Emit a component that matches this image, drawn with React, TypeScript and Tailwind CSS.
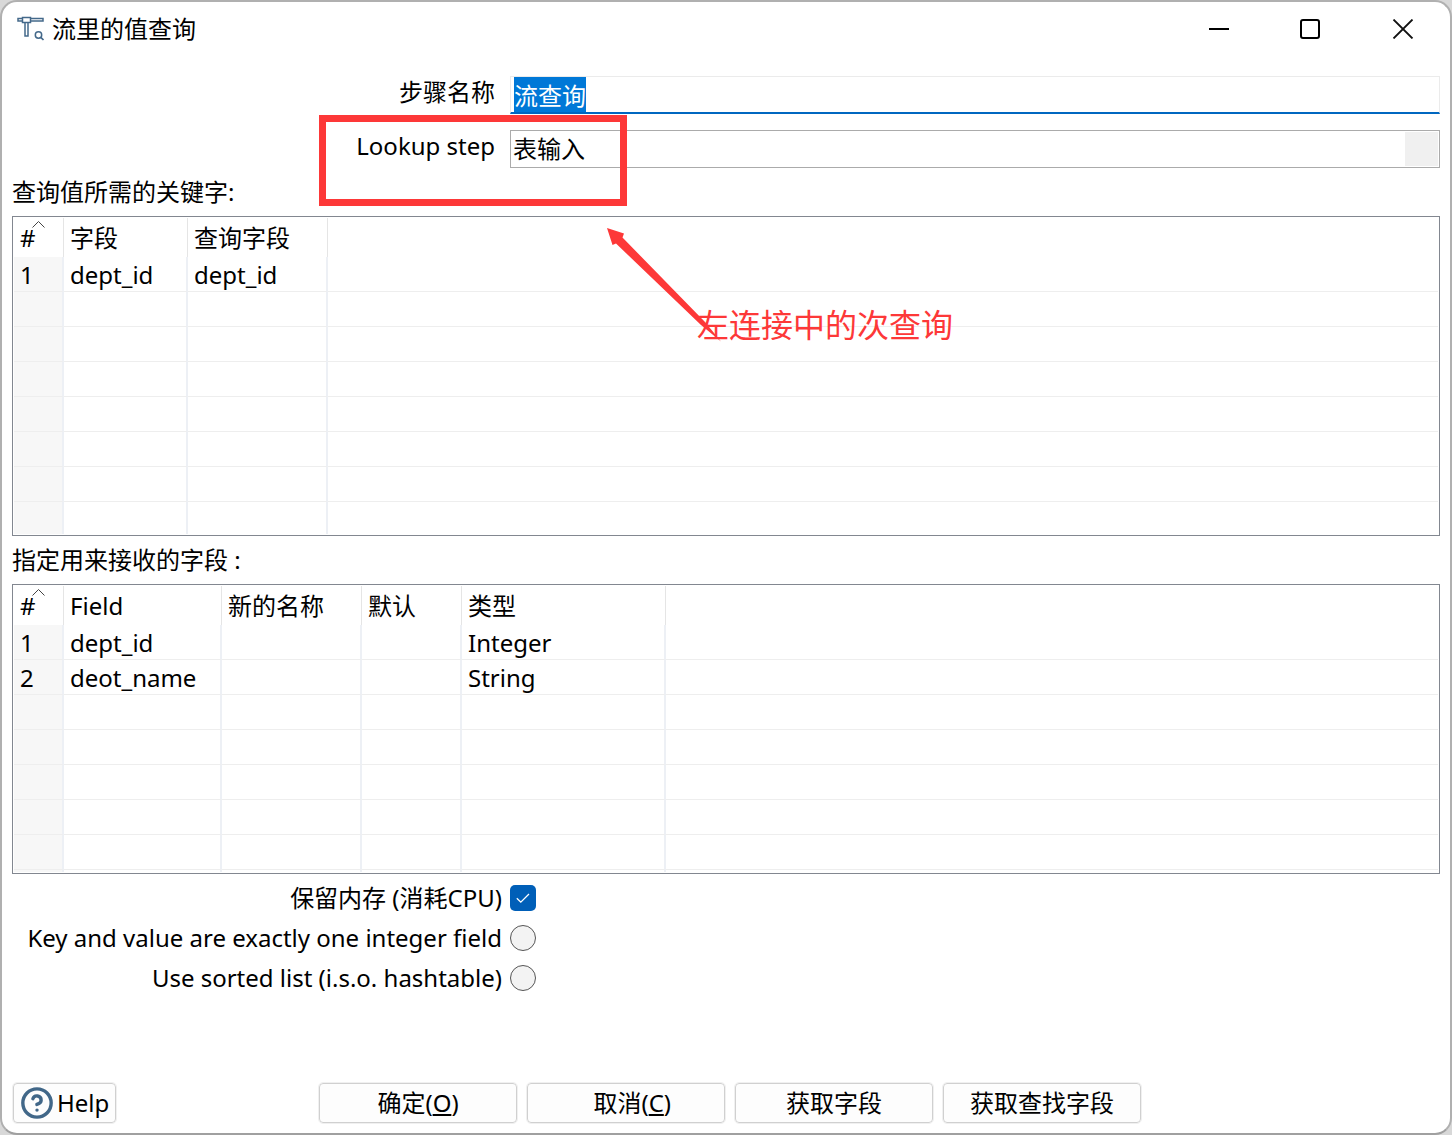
import React, { useEffect, useRef } from "react";
import { CircleHelp } from "lucide-react";
import clsx from "clsx";

type Column = {
  title: string;
  width?: string;
};

type GridProps = {
  label: string;
  columns: Column[];
  rows: string[][];
  emptyRows: number;
  lastRow: string;
};

const keyColumns: Column[] = [
  { title: "#", width: "w-[50px]" },
  { title: "字段", width: "w-[124px]" },
  { title: "查询字段", width: "w-[140px]" },
  { title: "" },
];

const keyRows = [["1", "dept_id", "dept_id", ""]];

const valueColumns: Column[] = [
  { title: "#", width: "w-[50px]" },
  { title: "Field", width: "w-[158px]" },
  { title: "新的名称", width: "w-[140px]" },
  { title: "默认", width: "w-[100px]" },
  { title: "类型", width: "w-[204px]" },
  { title: "" },
];

const valueRows = [
  ["1", "dept_id", "", "", "Integer", ""],
  ["2", "deot_name", "", "", "String", ""],
];

function HammerIcon() {
  return (
    <svg width="28" height="26" viewBox="0 0 28 26" fill="none" stroke="#44698a">
      <path d="M5.5 1.5h8v5h-8z" strokeWidth="1.5" />
      <path d="M13.5 2.5H26v2.5H13.5M5.5 2.5H1v2.5h4.5" strokeWidth="1.5" />
      <path d="M8 6.5v13.5h3V6.5" strokeWidth="1.5" />
      <circle cx="21.5" cy="19" r="3.2" strokeWidth="1.5" />
      <path d="M23.8 21.3l2.7 2.7" strokeWidth="1.7" />
    </svg>
  );
}

function TitleBar() {
  return (
    <header className="flex h-[54px] items-center justify-between pl-[15px] pr-9">
      <div className="flex items-center gap-[7px]">
        <HammerIcon />
        <h1>流里的值查询</h1>
      </div>
      <div className="flex items-center gap-[71px]">
        <button type="button" aria-label="最小化">
          <svg width="20" height="20" viewBox="0 0 20 20" stroke="black" strokeWidth="2">
            <path d="M0 10h20" />
          </svg>
        </button>
        <button type="button" aria-label="最大化">
          <svg width="20" height="20" viewBox="0 0 20 20" fill="none" stroke="black" strokeWidth="2">
            <rect x="1" y="1" width="18" height="18" rx="2" />
          </svg>
        </button>
        <button type="button" aria-label="关闭">
          <svg width="23" height="20" viewBox="0 0 23 20" stroke="#111" strokeWidth="1.8">
            <path d="M2.5 0.5l19 19M21.5 0.5l-19 19" />
          </svg>
        </button>
      </div>
    </header>
  );
}

function DataGrid({ label, columns, rows, emptyRows, lastRow }: GridProps) {
  const blank = columns.map(() => "");
  const body = [...rows, ...Array.from({ length: emptyRows }, () => blank)];

  return (
    <div className="border border-[#828790] p-px">
      <table aria-label={label} className="w-full table-fixed border-separate border-spacing-0 text-left">
        <thead>
          <tr>
            {columns.map((column, index) => (
              <th
                key={index}
                className={clsx(
                  "relative h-[39px] p-0 pl-1.5 font-normal leading-8 whitespace-nowrap",
                  column.width,
                  index < columns.length - 1 && "border-r border-[#e5e5e5]"
                )}
              >
                {column.title}
                {index === 0 && (
                  <svg
                    className="absolute left-[18px] top-[3px]"
                    width="13"
                    height="7"
                    viewBox="0 0 13 7"
                    fill="none"
                    stroke="#444"
                  >
                    <path d="M0.5 6.5l6-6 6 6" />
                  </svg>
                )}
              </th>
            ))}
          </tr>
        </thead>
        <tbody>
          {body.map((row, rowIndex) => (
            <tr key={rowIndex}>
              {row.map((cell, index) => (
                <td
                  key={index}
                  className={clsx(
                    "h-[35px] border-b border-b-[#eeeeee] p-0 pt-0.5 pl-1.5 leading-8 whitespace-nowrap",
                    index === 0 && "bg-[#f7f7f7]",
                    index < row.length - 1 && "border-r-2 border-r-[#edf0f5]"
                  )}
                >
                  {cell}
                </td>
              ))}
            </tr>
          ))}
          <tr>
            {blank.map((_, index) => (
              <td
                key={index}
                className={clsx(
                  "p-0",
                  lastRow,
                  index === 0 && "bg-[#f7f7f7]",
                  index < blank.length - 1 && "border-r-2 border-r-[#edf0f5]"
                )}
              />
            ))}
          </tr>
        </tbody>
      </table>
    </div>
  );
}

function PushButton({ children }: { children: React.ReactNode }) {
  return (
    <button
      type="button"
      className="h-10 w-[198px] rounded-sm border border-[#d0d0d0] bg-[#fdfdfd] outline outline-[#f0f0f0]"
    >
      {children}
    </button>
  );
}

function Annotation() {
  return (
    <>
      <div className="pointer-events-none absolute left-[317px] top-[113px] h-[91px] w-[308px] border-[7px] border-[#fd3838]" />
      <svg
        className="pointer-events-none absolute left-[605px] top-[226px]"
        width="116"
        height="116"
        viewBox="0 0 116 116"
        fill="#fd3838"
      >
        <path d="M0 0L17 5.5L15.5 9.5L98 94L114 113.5L94 97L9 15.5L5.5 17Z" />
      </svg>
      <p className="pointer-events-none absolute left-[695px] top-[300px] text-[32px] leading-[46px] whitespace-nowrap text-[#fd3838]">
        左连接中的次查询
      </p>
    </>
  );
}

function App() {
  const stepName = useRef<HTMLInputElement>(null);

  useEffect(() => {
    stepName.current?.focus();
    stepName.current?.select();
  }, []);

  return (
    <div className="min-h-screen bg-[#d8d8d8] flex">
      <main className="relative flex flex-1 flex-col rounded-[17px] border-2 border-[#b0b0b0] border-b-[#a0a0a0] bg-white font-['Noto_Sans','Noto_Sans_CJK_SC',sans-serif] text-2xl leading-8 text-black">
        <TitleBar />
        <form className="flex flex-1 flex-col px-2.5 pt-5 pb-2.5" onSubmit={(e) => e.preventDefault()}>
          <div className="flex items-start">
            <label htmlFor="step-name" className="w-[498px] shrink-0 pr-[15px] text-right">
              步骤名称
            </label>
            <input
              id="step-name"
              ref={stepName}
              type="text"
              defaultValue="流查询"
              className="h-[38px] min-w-0 flex-1 border border-b-2 border-[#ebebeb] border-b-[#0067c0] bg-white px-[3px] outline-none selection:bg-[#0078d7] selection:text-white"
            />
          </div>
          <div className="mt-4 flex items-start">
            <label htmlFor="lookup-step" className="w-[498px] shrink-0 pr-[15px] text-right">
              Lookup step
            </label>
            <div className="flex h-[38px] min-w-0 flex-1 border border-[#ababab] p-px">
              <select id="lookup-step" className="min-w-0 flex-1 appearance-none bg-white pl-px outline-none">
                <option>表输入</option>
              </select>
              <span className="w-[33px] bg-[#f0f0f0]" />
            </div>
          </div>

          <h2 className="mt-2 mb-2">查询值所需的关键字:</h2>
          <DataGrid label="查询值所需的关键字" columns={keyColumns} rows={keyRows} emptyRows={6} lastRow="h-8" />

          <h2 className="mt-2 mb-2">指定用来接收的字段 :</h2>
          <DataGrid label="指定用来接收的字段" columns={valueColumns} rows={valueRows} emptyRows={5} lastRow="h-0.5" />

          <div className="mt-1 flex h-10 items-center">
            <label htmlFor="keep-memory" className="w-[498px] shrink-0 pr-2 text-right">
              保留内存 (消耗CPU)
            </label>
            <span className="relative flex">
              <input
                id="keep-memory"
                type="checkbox"
                defaultChecked
                className="size-[26px] appearance-none rounded-[5px] bg-[#005fb8]"
              />
              <svg
                className="pointer-events-none absolute left-1.5 top-[7px]"
                width="14"
                height="12"
                viewBox="0 0 14 12"
                fill="none"
                stroke="white"
                strokeWidth="1.3"
              >
                <path d="M0.8 6.2l4 4L13 2" />
              </svg>
            </span>
          </div>
          <div className="flex h-10 items-center">
            <label htmlFor="integer-pair" className="w-[498px] shrink-0 pr-2 text-right whitespace-nowrap">
              Key and value are exactly one integer field
            </label>
            <input
              id="integer-pair"
              type="radio"
              name="storage"
              className="size-[26px] appearance-none rounded-full border border-[#555] bg-[#f3f3f3]"
            />
          </div>
          <div className="flex h-10 items-center">
            <label htmlFor="sorted-list" className="w-[498px] shrink-0 pr-2 text-right whitespace-nowrap">
              Use sorted list (i.s.o. hashtable)
            </label>
            <input
              id="sorted-list"
              type="radio"
              name="storage"
              className="size-[26px] appearance-none rounded-full border border-[#555] bg-[#f3f3f3]"
            />
          </div>

          <footer className="mt-auto flex items-center px-px">
            <div className="w-[306px] shrink-0">
              <button
                type="button"
                className="flex h-10 items-center gap-[3px] rounded-sm border border-[#d0d0d0] bg-[#fdfdfd] px-1.5 outline outline-[#f0f0f0]"
              >
                <CircleHelp size={34} strokeWidth={2.4} color="#416788" />
                Help
              </button>
            </div>
            <div className="flex gap-2.5">
              <PushButton>
                确定(<u className="underline-offset-2">O</u>)
              </PushButton>
              <PushButton>
                &nbsp;&nbsp;取消(<u className="underline-offset-2">C</u>)
              </PushButton>
              <PushButton>获取字段</PushButton>
              <PushButton>获取查找字段</PushButton>
            </div>
          </footer>
        </form>
        <Annotation />
      </main>
    </div>
  );
}

export default App;
